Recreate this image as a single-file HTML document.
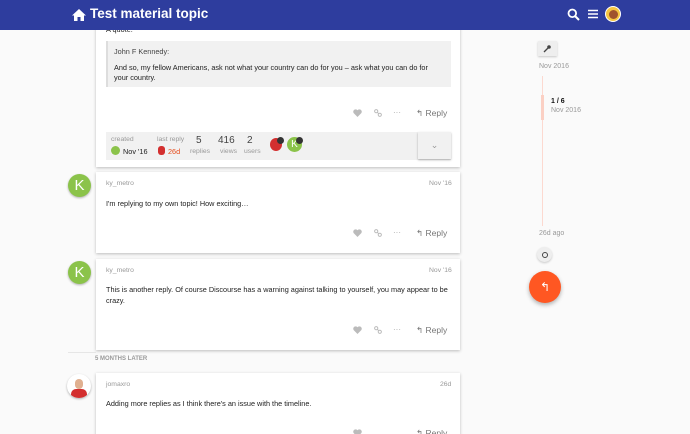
<!DOCTYPE html><html><head><style>
*{margin:0;padding:0;box-sizing:border-box}
html,body{width:690px;height:434px;overflow:hidden}
body{background:#fafafa;font-family:"Liberation Sans",sans-serif;position:relative;color:#222}
.a{position:absolute}
.card{position:absolute;left:96px;width:364px;background:#fff;box-shadow:0 1px 3px rgba(0,0,0,.25)}
.t{font-size:7.3px;color:#222}
.u{font-size:6.8px;color:#999}
.av{position:absolute;width:23px;height:23px;border-radius:50%;background:#8bc34a;color:#fff;font-size:15px;text-align:center;line-height:23px;box-shadow:0 1px 2px rgba(0,0,0,.3)}
.rp{font-size:8.5px;color:#777}
.ic{position:absolute}
</style></head><body>
<div class="card" style="top:0px;height:167px">
<div class="a t" style="left:10px;top:25px">A quote:</div>
<div class="a" style="left:10px;top:41px;width:345px;height:46px;background:#f1f1f1;border-left:2px solid #ddd"></div>
<div class="a t" style="left:18px;top:47px;color:#444">John F Kennedy:</div>
<div class="a t" style="left:18px;top:63px;width:330px;line-height:10px">And so, my fellow Americans, ask not what your country can do for you – ask what you can do for your country.</div>
<svg class="ic" style="left:257px;top:109px" width="9" height="8" viewBox="0 0 9 8"><path d="M4.5 8L.8 4.3A2.1 2.1 0 014.5 1.2 2.1 2.1 0 018.2 4.3z" fill="#bbb"/></svg>
<svg class="ic" style="left:278px;top:109px" width="8" height="8" viewBox="0 0 8 8"><circle cx="2.2" cy="2.2" r="1.6" stroke="#bbb" fill="none"/><circle cx="5.8" cy="5.8" r="1.6" stroke="#bbb" fill="none"/><path d="M3.3 3.3l1.4 1.4" stroke="#bbb"/></svg>
<div class="a" style="left:297px;top:108px;color:#aaa;font-size:8px">···</div>
<div class="a rp" style="left:320px;top:108px">↰ Reply</div>
<div class="a" style="left:10px;top:132px;width:345px;height:28px;background:#f1f1f1"></div>
<div class="a u" style="left:15px;top:136px">created</div>
<div class="a" style="left:15px;top:146px;width:9px;height:9px;border-radius:50%;background:#8bc34a"></div>
<div class="a t" style="left:27px;top:147px">Nov '16</div>
<div class="a u" style="left:61px;top:136px">last reply</div>
<div class="a" style="left:62px;top:146px;width:7px;height:9px;background:#d32f2f;border-radius:3px"></div>
<div class="a t" style="left:72px;top:147px;color:#e64a19">26d</div>
<div class="a" style="left:100px;top:135px;font-size:10px;color:#444">5</div><div class="a u" style="left:94px;top:148px">replies</div>
<div class="a" style="left:122px;top:135px;font-size:10px;color:#444">416</div><div class="a u" style="left:124px;top:148px">views</div>
<div class="a" style="left:151px;top:135px;font-size:10px;color:#444">2</div><div class="a u" style="left:148px;top:148px">users</div>
<div class="a" style="left:174px;top:138px;width:12px;height:13px;border-radius:50%;background:#d32f2f"></div>
<div class="a" style="left:181px;top:137px;width:7px;height:7px;border-radius:50%;background:#333"></div>
<div class="a" style="left:191px;top:137px;width:15px;height:15px;border-radius:50%;background:#8bc34a;color:#fff;font-size:10px;text-align:center;line-height:15px">K</div>
<div class="a" style="left:200px;top:137px;width:7px;height:7px;border-radius:50%;background:#333"></div>
<div class="a" style="left:322px;top:132px;width:33px;height:27px;background:#f1f1f1;box-shadow:0 1px 2px rgba(0,0,0,.3);color:#999;font-size:9px;text-align:center;line-height:27px">⌄</div>
</div>
<div class="a" style="left:0;top:0;width:690px;height:30px;background:#2e3d9e"></div>
<svg class="a" style="left:71px;top:8px" width="16" height="14" viewBox="0 0 16 14"><path d="M8 1L1 7.5h2V13h3.5V9h3v4H13V7.5h2z" fill="#fff"/></svg>
<div class="a" style="left:90px;top:6px;color:#fff;font-size:13.5px;font-weight:bold">Test material topic</div>
<svg class="a" style="left:567px;top:8px" width="13" height="13" viewBox="0 0 13 13"><circle cx="5.3" cy="5.3" r="3.8" stroke="#fff" stroke-width="1.8" fill="none"/><path d="M8 8l4 4" stroke="#fff" stroke-width="2"/></svg>
<svg class="a" style="left:588px;top:9px" width="10" height="10" viewBox="0 0 10 10"><path d="M0 1.5h10M0 5h10M0 8.5h10" stroke="#fff" stroke-width="1.6"/></svg>
<div class="a" style="left:605px;top:6px;width:16px;height:16px;border-radius:50%;background:#f5c542;border:1px solid #fff"><div style="margin:3px auto;width:9px;height:9px;border-radius:50%;background:#a0522d"></div></div>

<div class="av" style="left:68px;top:174px">K</div>
<div class="card" style="top:172px;height:81px">
<div class="a u" style="left:10px;top:8px">ky_metro</div><div class="a u" style="left:333px;top:8px">Nov '16</div>
<div class="a t" style="left:10px;top:27px">I'm replying to my own topic! How exciting…</div>
<svg class="ic" style="left:257px;top:57px" width="9" height="8" viewBox="0 0 9 8"><path d="M4.5 8L.8 4.3A2.1 2.1 0 014.5 1.2 2.1 2.1 0 018.2 4.3z" fill="#bbb"/></svg>
<svg class="ic" style="left:278px;top:57px" width="8" height="8" viewBox="0 0 8 8"><circle cx="2.2" cy="2.2" r="1.6" stroke="#bbb" fill="none"/><circle cx="5.8" cy="5.8" r="1.6" stroke="#bbb" fill="none"/><path d="M3.3 3.3l1.4 1.4" stroke="#bbb"/></svg>
<div class="a" style="left:297px;top:56px;color:#aaa;font-size:8px">···</div>
<div class="a rp" style="left:320px;top:56px">↰ Reply</div>
</div>

<div class="av" style="left:68px;top:261px">K</div>
<div class="card" style="top:259px;height:91px">
<div class="a u" style="left:10px;top:8px">ky_metro</div><div class="a u" style="left:333px;top:8px">Nov '16</div>
<div class="a t" style="left:10px;top:25px;width:345px;line-height:11px">This is another reply. Of course Discourse has a warning against talking to yourself, you may appear to be crazy.</div>
<svg class="ic" style="left:257px;top:67px" width="9" height="8" viewBox="0 0 9 8"><path d="M4.5 8L.8 4.3A2.1 2.1 0 014.5 1.2 2.1 2.1 0 018.2 4.3z" fill="#bbb"/></svg>
<svg class="ic" style="left:278px;top:67px" width="8" height="8" viewBox="0 0 8 8"><circle cx="2.2" cy="2.2" r="1.6" stroke="#bbb" fill="none"/><circle cx="5.8" cy="5.8" r="1.6" stroke="#bbb" fill="none"/><path d="M3.3 3.3l1.4 1.4" stroke="#bbb"/></svg>
<div class="a" style="left:297px;top:66px;color:#aaa;font-size:8px">···</div>
<div class="a rp" style="left:320px;top:66px">↰ Reply</div>
</div>
<div class="a" style="left:68px;top:352px;width:28px;height:1px;background:#e6e6e6"></div>
<div class="a" style="left:95px;top:356px;font-size:6px;font-weight:bold;color:#999">5 MONTHS LATER</div>

<div class="a" style="left:67px;top:374px;width:24px;height:24px;border-radius:50%;background:#fff;box-shadow:0 1px 2px rgba(0,0,0,.3);overflow:hidden"><div style="margin:5px 0 0 8px;width:8px;height:10px;background:#e0b090;border-radius:4px"></div><div style="margin:0 0 0 4px;width:16px;height:10px;background:#d32f2f;border-radius:5px 5px 0 0"></div></div>
<div class="card" style="top:373px;height:70px">
<div class="a u" style="left:10px;top:8px">jomaxro</div><div class="a u" style="left:344px;top:8px">26d</div>
<div class="a t" style="left:10px;top:26px">Adding more replies as I think there's an issue with the timeline.</div>
<svg class="ic" style="left:257px;top:56px" width="9" height="8" viewBox="0 0 9 8"><path d="M4.5 8L.8 4.3A2.1 2.1 0 014.5 1.2 2.1 2.1 0 018.2 4.3z" fill="#bbb"/></svg>
<div class="a rp" style="left:320px;top:55px">↰ Reply</div>
</div>

<div class="a" style="left:538px;top:41px;width:19px;height:15px;background:#eee;box-shadow:0 1px 2px rgba(0,0,0,.2)"></div>
<svg class="a" style="left:543px;top:44px" width="9" height="9" viewBox="0 0 9 9"><path d="M1 8l4-4" stroke="#444" stroke-width="1.3"/><circle cx="6" cy="3" r="1.8" fill="#444"/></svg>
<div class="a u" style="left:539px;top:63px;font-size:7px">Nov 2016</div>
<div class="a" style="left:542px;top:76px;width:1px;height:150px;background:#fcd9d0"></div>
<div class="a" style="left:541px;top:95px;width:3px;height:25px;background:#fbd0c4"></div>
<div class="a" style="left:551px;top:98px;font-size:7px;font-weight:bold;color:#111">1 / 6</div>
<div class="a u" style="left:551px;top:107px;font-size:7px">Nov 2016</div>
<div class="a u" style="left:539px;top:230px;font-size:7px">26d ago</div>
<div class="a" style="left:537px;top:247px;width:15px;height:15px;border-radius:50%;background:#eee;box-shadow:0 1px 2px rgba(0,0,0,.2)"><div style="margin:4.5px;width:6px;height:6px;border-radius:50%;border:1.2px solid #444"></div></div>
<div class="a" style="left:529px;top:271px;width:32px;height:32px;border-radius:50%;background:#ff5722;box-shadow:0 2px 4px rgba(0,0,0,.3);color:#fff;font-size:12px;text-align:center;line-height:32px">↰</div>
</body></html>
